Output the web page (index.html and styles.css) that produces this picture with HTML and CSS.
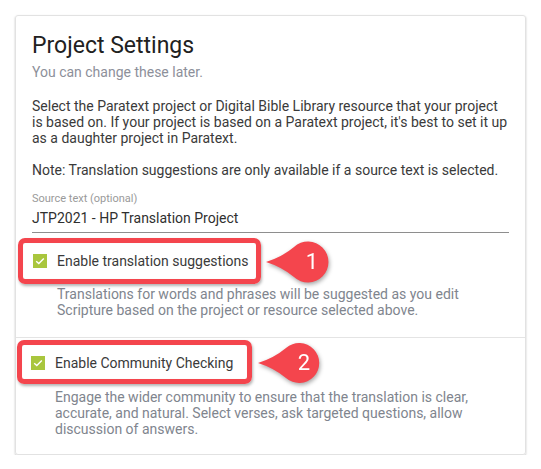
FILE: index.html
```html
<!DOCTYPE html>
<html>
<head>
<meta charset="utf-8">
<link rel="stylesheet" href="styles.css">
</head>
<body>
<div class="card">
  <div class="head">
    <h1 class="title">Project Settings</h1>
    <div class="subtitle">You can change these later.</div>
    <p class="para">Select the Paratext project or Digital Bible Library resource that your project is based on. If your project is based on a Paratext project, it's best to set it up as a daughter project in Paratext.</p>
    <p class="para note">Note: Translation suggestions are only available if a source text is selected.</p>
    <div class="field">
      <div class="field-label">Source text (optional)</div>
      <div class="field-value">JTP2021 - HP Translation Project</div>
    </div>
  </div>
  <div class="section s1">
    <div class="row">
      <span class="check"><svg viewBox="0 0 14 14" width="14" height="14"><path d="M3.2 7.2 L5.8 9.6 L10.8 4.4" fill="none" stroke="#fff" stroke-width="1.4"/></svg></span>
      <span class="row-label">Enable translation suggestions</span>
    </div>
    <div class="desc">Translations for words and phrases will be suggested as you edit Scripture based on the project or resource selected above.</div>
  </div>
  <div class="section s2">
    <div class="row">
      <span class="check"><svg viewBox="0 0 14 14" width="14" height="14"><path d="M3.2 7.2 L5.8 9.6 L10.8 4.4" fill="none" stroke="#fff" stroke-width="1.4"/></svg></span>
      <span class="row-label">Enable Community Checking</span>
    </div>
    <div class="desc">Engage the wider community to ensure that the translation is clear, accurate, and natural. Select verses, ask targeted questions, allow discussion of answers.</div>
  </div>

  <div class="hl hl1"></div>
  <div class="callout c1">
    <svg viewBox="0 0 70 50" width="70" height="50"><path d="M2 25 Q18 20 30 10 A20.5 20.5 0 1 1 30 40 Q18 30 2 25 Z" fill="#f4454d"/></svg>
    <span class="num">1</span>
  </div>
  <div class="hl hl2"></div>
  <div class="callout c2">
    <svg viewBox="0 0 70 50" width="70" height="50"><path d="M2 25 Q18 20 30 10 A20 20 0 1 1 30 40 Q18 30 2 25 Z" fill="#f4454d"/></svg>
    <span class="num">2</span>
  </div>
</div>
</body>
</html>
```
FILE: styles.css
```css
html, body {
  margin: 0;
  padding: 0;
  background: #fff;
}
body {
  font-family: Roboto, "Liberation Sans", sans-serif;
  -webkit-font-smoothing: antialiased;
}
.card {
  position: relative;
  margin: 15px 0 0 15px;
  width: 509px;
  border: 1px solid #e2e2e2;
  border-radius: 3px;
  box-shadow: 0 1px 2px rgba(0,0,0,0.25);
  padding-bottom: 17px;
}
.head {
  padding: 16px 15px 0 16px;
}
.title {
  margin: 0;
  font-size: 23px;
  line-height: 28px;
  font-weight: 400;
  color: #212121;
}
.subtitle {
  margin-top: 4px;
  font-size: 14px;
  line-height: 16px;
  color: #8d909a;
}
.para {
  margin: 18px 0 0;
  font-size: 14px;
  line-height: 16px;
  color: #3a3a3a;
}
.note {
  margin-top: 16px;
}
.field {
  margin-top: 14px;
  border-bottom: 1px solid #8e8e8e;
  padding-bottom: 6px;
  margin-right: 1px;
}
.field-label {
  font-size: 11px;
  line-height: 13px;
  color: #9a9a9a;
}
.field-value {
  margin-top: 5px;
  font-size: 14px;
  line-height: 16px;
  color: #2f2f2f;
}
.section {
  padding: 0 15px 0 16px;
}
.s1 {
  padding-top: 20px;
  padding-bottom: 19px;
  border-bottom: 1px solid #e4e4e4;
}
.s2 {
  padding-top: 17px;
}
.s2 .row, .s2 .desc {
  margin-left: -2px;
}
.row {
  display: flex;
  align-items: center;
  gap: 10px;
  height: 16px;
}
.check {
  width: 14px;
  height: 14px;
  margin-left: 1px;
  background: #a9c63d;
  display: block;
}
.check svg {
  display: block;
}
.row-label {
  font-size: 14px;
  line-height: 16px;
  color: #3a3a3a;
}
.desc {
  margin-top: 17px;
  padding-left: 25px;
  font-size: 14px;
  line-height: 16px;
  color: #80858e;
}
.s1 .desc {
  margin-top: 17px;
}
.s2 .desc {
  margin-top: 18px;
}
.hl {
  position: absolute;
  border: 5px solid #f4454d;
  border-radius: 7px;
  box-sizing: border-box;
  box-shadow: 1px 2px 3px rgba(0,0,0,0.3), inset 0 0 1px rgba(0,0,0,0.1);
}
.hl1 {
  left: 2px;
  top: 222px;
  width: 243px;
  height: 46px;
}
.hl2 {
  left: 1px;
  top: 324px;
  width: 235px;
  height: 44px;
}
.callout {
  position: absolute;
  width: 70px;
  height: 50px;
  filter: drop-shadow(1px 2px 2px rgba(0,0,0,0.35));
}
.callout svg {
  display: block;
}
.num {
  position: absolute;
  left: 30px;
  top: 13px;
  width: 36px;
  text-align: center;
  font-size: 22px;
  line-height: 24px;
  color: #fff;
}
.c1 {
  left: 248px;
  top: 221px;
}
.c2 {
  left: 240px;
  top: 322px;
}
```
